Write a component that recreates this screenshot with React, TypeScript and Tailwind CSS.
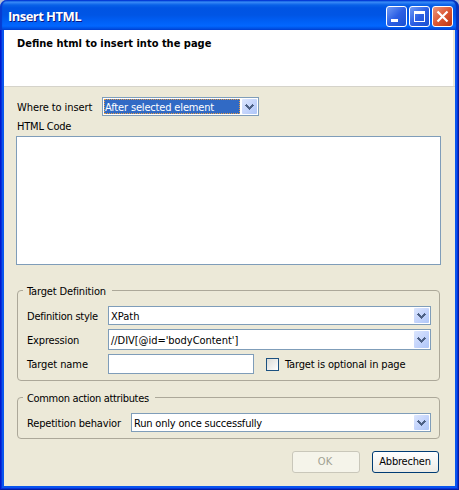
import React from "react";

function Arrow() {
  return (
    <span className="flex w-[15px] shrink-0 items-center justify-center self-stretch rounded-[1px] bg-linear-to-br from-[#dce6fd] via-[#c5d5fc] to-[#aec6f8]">
      <svg width="9" height="6" viewBox="0 0 9 6" shapeRendering="crispEdges" fill="#4d6185">
        <path d="M1 0h1v1h1v1h1v1h1v-1h1v-1h1v-1h1v1h1v1h-1v1h-1v1h-1v1h-1v1h-1v-1h-1v-1h-1v-1h-1v-1h-1v-1h1z" />
      </svg>
    </span>
  );
}

function Select({ className, children }: { className: string; children: React.ReactNode }) {
  return (
    <div className={`flex items-center border border-[#7f9db9] bg-white p-px ${className}`}>
      <span className="grow pt-[2px] pl-px">{children}</span>
      <Arrow />
    </div>
  );
}

function Group({ title, className, titleClass, children }: { title: string; className: string; titleClass: string; children: React.ReactNode }) {
  return (
    <div className={`ml-[13px] w-[423px] rounded-[4px] border border-[#aca899] pl-[9px] ${className}`}>
      <div className={`-mt-[8px] -ml-[4px] flex h-[15px] items-center bg-[#ece9d8] pt-[2px] pl-[4px] ${titleClass}`}>{title}</div>
      {children}
    </div>
  );
}

const caption = "flex h-[21px] w-[21px] items-center justify-center rounded-[3px] border border-white";

export default function App() {
  return (
    <div className="flex h-[490px] w-[459px] flex-col overflow-hidden bg-[#b5bed5] font-['DejaVu_Sans_Condensed','DejaVu_Sans',sans-serif] text-[11px] leading-[14px] whitespace-nowrap text-black [font-stretch:condensed]">
      <header className="flex h-[30px] shrink-0 items-start rounded-t-[7px] bg-[linear-gradient(to_bottom,#0831d9_0,#0653dd_1px,#3c8cf8_2px,#2a7df2_3px,#0861e8_5px,#0054e3_8px,#0055e5_15px,#005ff5_21px,#0267ff_26px,#0054e8_28px,#0045d5_30px)] pt-[6px] pl-2 shadow-[inset_2px_0_1px_#073bd0,inset_-3px_0_1px_#0831b9]">
        <span className="mt-px w-[379px] font-['Open_Sans',sans-serif] text-[13px] leading-[18px] font-bold tracking-[-0.55px] text-white [font-stretch:normal] [text-shadow:1px_1px_0_#0a1883]">Insert HTML</span>
        <div className="-ml-[1px] flex gap-[2px]">
          <span className={`${caption} bg-linear-to-br from-[#719af5] via-[#2c5fe4] to-[#1950d2]`}>
            <svg width="19" height="19" shapeRendering="crispEdges"><path d="M4 12h7v3H4z" fill="white" /></svg>
          </span>
          <span className={`${caption} bg-linear-to-br from-[#719af5] via-[#2c5fe4] to-[#1950d2]`}>
            <svg width="19" height="19" shapeRendering="crispEdges"><path fillRule="evenodd" d="M4 4h11v11H4zM5 7v7h9V7z" fill="white" /></svg>
          </span>
          <span className={`${caption} bg-linear-to-br from-[#eb957c] via-[#dc5733] to-[#bd3511]`}>
            <svg width="19" height="19"><path d="M4.5 4.5l10 10m0-10l-10 10" stroke="white" strokeWidth="2.2" /></svg>
          </span>
        </div>
      </header>
      <main className="h-[460px] border border-t-0 border-[#001ea0] border-l-[#0019cf]">
        <div className="h-full border border-t-0 border-[#0831d9]">
          <div className="flex h-full flex-col border-x-2 border-b-2 border-[#0855ee] bg-[#ece9d8]">
            <div className="h-[56px] w-[449px] shrink-0 bg-white pt-[7px] pl-[13px]">
              <span className="font-bold">Define html to insert into the page</span>
            </div>
            <div className="h-px shrink-0 bg-[#d5d3ca]" />
            <div className="mt-[10px] flex h-[19px] shrink-0 items-center pl-[13px]">
              <span className="w-[85px] pt-[2px] tracking-[-0.08px]">Where to insert</span>
              <div className="flex h-[19px] w-[157px] items-center border border-[#7f9db9] bg-white p-px">
                <span className="mr-[2px] flex h-[15px] grow items-center border border-dotted border-[#e39b45] bg-[#316ac5] pt-[2px] tracking-[-0.16px] text-white">After selected element</span>
                <Arrow />
              </div>
            </div>
            <div className="mt-[3px] h-[14px] shrink-0 pl-[13px] tracking-[-0.2px]"><span className="block pt-px">HTML Code</span></div>
            <textarea className="mt-[3px] ml-[12px] block h-[129px] w-[425px] shrink-0 resize-none border border-[#7f9db9] bg-white outline-none" />
            <Group title="Target Definition" titleClass="w-[89px] tracking-[-0.15px]" className="mt-[25px] h-[91px] shrink-0">
              <div className="mt-[8px] flex items-center">
                <span className="w-[81px] pt-[2px] tracking-[-0.24px]">Definition style</span>
                <Select className="h-[19px] w-[323px]">XPath</Select>
              </div>
              <div className="mt-[4px] flex items-center">
                <span className="w-[81px] pt-[2px] tracking-[-0.15px]">Expression</span>
                <Select className="h-[21px] w-[323px] tracking-[-0.04px]">//DIV[@id='bodyContent']</Select>
              </div>
              <div className="mt-[4px] flex items-center">
                <span className="w-[81px] pt-px tracking-[-0.06px]">Target name</span>
                <input className="h-[20px] w-[146px] border border-[#7f9db9] bg-white outline-none" />
                <span className="ml-[12px] h-[13px] w-[13px] border border-[#1c5180] bg-linear-to-br from-[#dcdcd7] to-white" />
                <span className="ml-[6px] pt-[2px] tracking-[-0.17px]">Target is optional in page</span>
              </div>
            </Group>
            <Group title="Common action attributes" titleClass="w-[132px] tracking-[-0.33px]" className="mt-[16px] h-[42px] shrink-0">
              <div className="mt-[8px] flex items-center">
                <span className="w-[104px] pt-[2px] tracking-[-0.17px]">Repetition behavior</span>
                <Select className="h-[19px] w-[300px] tracking-[-0.19px]">Run only once successfully</Select>
              </div>
            </Group>
            <div className="mt-[12px] flex gap-[12px] pl-[288px]">
              <button className="h-[22px] w-[68px] rounded-[3px] border border-[#c9c7ba] bg-[#f5f4ea] pr-[2px] text-[#a1a192]">OK</button>
              <button className="h-[22px] w-[67px] rounded-[3px] border border-[#003c74] bg-linear-to-b from-white to-[#ecebe5] pr-px tracking-[-0.2px]">Abbrechen</button>
            </div>
          </div>
        </div>
      </main>
    </div>
  );
}
